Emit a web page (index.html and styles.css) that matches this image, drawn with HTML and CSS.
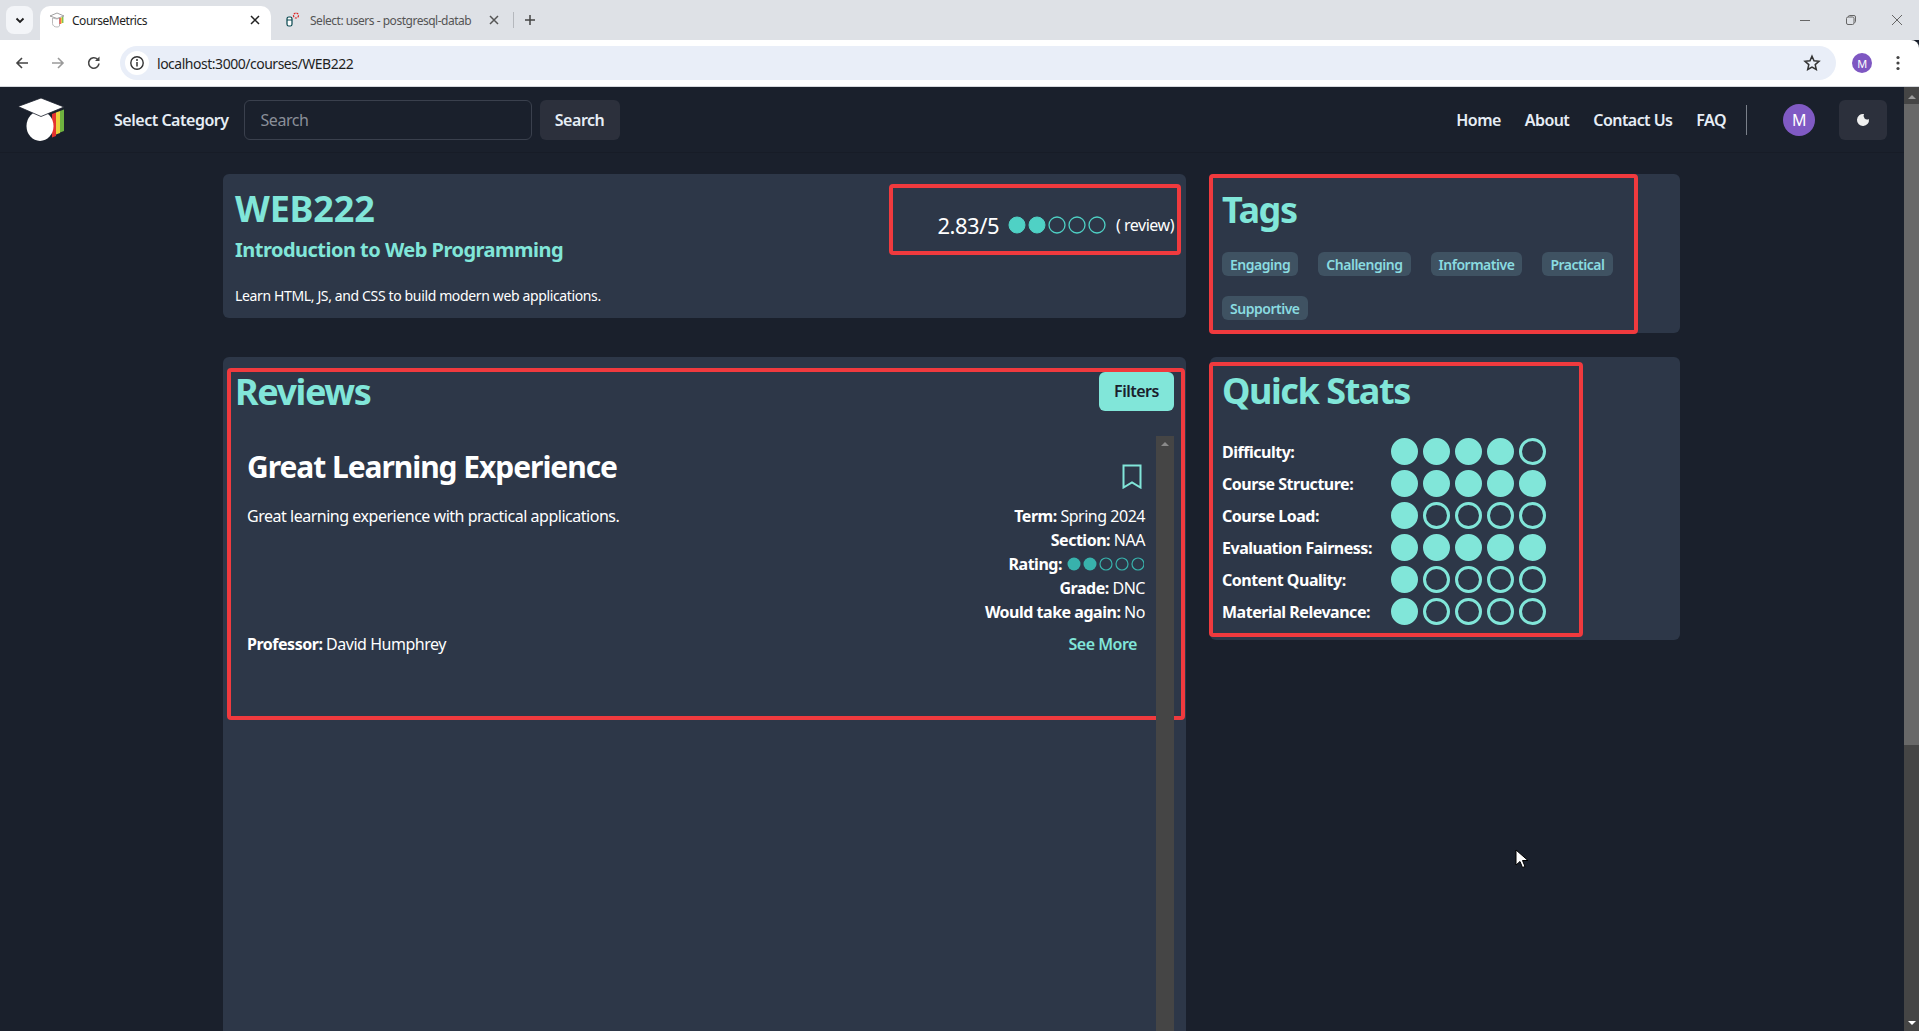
FILE: index.html
```html
<!DOCTYPE html>
<html lang="en">
<head>
<meta charset="utf-8">
<title>CourseMetrics</title>
<link rel="stylesheet" href="styles.css">
</head>
<body>
<div class="window">
  <header class="chrome">
    <div class="tabstrip">
      <button class="tab-menu"><svg width="12" height="12" viewBox="0 0 12 12"><path d="M2.500 4.500 6 8l3.500-3.500" fill="none" stroke="#1f1f1f" stroke-width="1.800"/></svg></button>
      <div class="tab tab-active">
        <svg class="fav" width="16" height="16" viewBox="0 0 16 16"><path d="M8 1 15 4 8 6.500 1 4Z" fill="#fff" stroke="#8a8a8a" stroke-width=".8"/><path d="M3.500 6v5.500C3.500 14 6 15 8 15s2.500-1 2.500-1V6L8 7Z" fill="#fff" stroke="#aaa" stroke-width=".8"/><rect x="10.500" y="6" width="1.300" height="6" fill="#e33"/><rect x="11.800" y="5.500" width="1.300" height="6" fill="#ec4"/><rect x="13.100" y="5" width="1.300" height="6" fill="#7b4"/></svg>
        <span class="tab-title">CourseMetrics</span>
        <svg class="tab-x" width="10" height="10" viewBox="0 0 10 10"><path d="M1 1l8 8M9 1 1 9" stroke="#222" stroke-width="1.500"/></svg>
      </div>
      <div class="tab tab-idle">
        <svg class="fav" width="16" height="16" viewBox="0 0 16 16"><rect x="3" y="5" width="5" height="9" rx="1.800" fill="#fff" stroke="#06474f" stroke-width="1.200"/><path d="M3 8h5" stroke="#06474f"/><circle cx="12" cy="3.500" r="2.500" fill="none" stroke="#d22" stroke-width="1.200" stroke-dasharray="2 1"/></svg>
        <span class="tab-title tab-title-dim">Select: users - postgresql-datab</span>
        <svg class="tab-x" width="10" height="10" viewBox="0 0 10 10"><path d="M1 1l8 8M9 1 1 9" stroke="#555" stroke-width="1.500"/></svg>
      </div>
      <span class="tab-sep"></span>
      <svg class="tab-plus" width="12" height="12" viewBox="0 0 12 12"><path d="M6 1v10M1 6h10" stroke="#444" stroke-width="1.500"/></svg>
      <div class="win-controls">
        <svg width="12" height="12" viewBox="0 0 12 12"><path d="M1 6.500h10" stroke="#666"/></svg>
        <svg width="12" height="12" viewBox="0 0 12 12"><rect x="1.500" y="3" width="7.500" height="7.500" rx="1.500" fill="none" stroke="#666"/><path d="M3.500 3V2.500a1 1 0 0 1 1-1H9a1.500 1.500 0 0 1 1.500 1.500v4.500a1 1 0 0 1-1 1" fill="none" stroke="#666"/></svg>
        <svg width="12" height="12" viewBox="0 0 12 12"><path d="M1 1l10 10M11 1 1 11" stroke="#666"/></svg>
      </div>
    </div>
    <div class="toolbar">
      <svg class="tool" width="16" height="16" viewBox="0 0 16 16"><path d="M14 8H3M8 3 3 8l5 5" fill="none" stroke="#444" stroke-width="1.600"/></svg>
      <svg class="tool" width="16" height="16" viewBox="0 0 16 16"><path d="M2 8h11M8 3l5 5-5 5" fill="none" stroke="#9a9a9a" stroke-width="1.600"/></svg>
      <svg class="tool" width="16" height="16" viewBox="0 0 16 16"><path d="M13 8.500A5.200 5.200 0 1 1 11.500 4.300" fill="none" stroke="#444" stroke-width="1.600"/><path d="M13.500 1.500v4.500H9" fill="#444"/></svg>
      <div class="omnibox">
        <span class="info"><svg width="16" height="16" viewBox="0 0 16 16"><circle cx="8" cy="8" r="6.200" fill="none" stroke="#333" stroke-width="1.400"/><path d="M8 7v4.500" stroke="#333" stroke-width="1.500"/><circle cx="8" cy="5" r="1" fill="#333"/></svg></span>
        <span class="url">localhost:3000/courses/WEB222</span>
        <svg class="star" width="18" height="18" viewBox="0 0 18 18"><path d="M9 2.200l2 4.600 5 .5-3.800 3.300 1.100 4.900L9 13l-4.300 2.500 1.100-4.900L2 7.300l5-.5Z" fill="none" stroke="#333" stroke-width="1.500"/></svg>
      </div>
      <span class="chrome-avatar">M</span>
      <svg class="kebab" width="4" height="16" viewBox="0 0 4 16"><circle cx="2" cy="2.500" r="1.600" fill="#444"/><circle cx="2" cy="8" r="1.600" fill="#444"/><circle cx="2" cy="13.500" r="1.600" fill="#444"/></svg>
    </div>
  </header>

  <div class="viewport">
    <div class="page">
      <nav class="navbar">
        <svg class="logo" width="48" height="44" viewBox="0 0 48 44"><path d="M34 16l4-1.500V38l-4 1.500Z" fill="#e5332f"/><path d="M38 14.500l4-1.500V35l-4 1.500Z" fill="#e8d03c"/><path d="M42 13l4-1.500V33l-4 1.500Z" fill="#6fb23f"/><ellipse cx="22" cy="28" rx="13.500" ry="15" fill="#fff"/><path d="M23 0 46 9 23 18.500 0 8.500Z" fill="#fff" stroke="#1a202c" stroke-width=".8"/></svg>
        <span class="nav-category">Select Category</span>
        <input class="nav-input" type="text" placeholder="Search">
        <button class="nav-search">Search</button>
        <div class="nav-links">
          <a>Home</a><a>About</a><a>Contact Us</a><a>FAQ</a>
        </div>
        <span class="nav-divider"></span>
        <span class="nav-avatar">M</span>
        <button class="nav-theme"><svg width="16" height="16" viewBox="0 0 16 16"><path d="M9 2.100A6 6 0 1 0 13.900 7 3.600 3.600 0 0 1 9 2.100Z" fill="#f0f0f0"/></svg></button>
      </nav>

      <main class="content">
        <section class="card course-card">
          <div class="course-head">
            <h1 class="h-big h-code">WEB222</h1>
            <div class="course-rating mark">
              <span class="rating-num">2.83/5</span>
              <svg width="100" height="18" viewBox="0 0 100 18" class="rating-dots">
                <circle cx="10" cy="9" r="8" fill="#4fd1c5" stroke="#4fd1c5" stroke-width="1"/>
                <circle cx="30" cy="9" r="8" fill="#4fd1c5" stroke="#4fd1c5" stroke-width="1"/>
                <circle cx="50" cy="9" r="8" fill="none" stroke="#4fd1c5" stroke-width="1.300"/>
                <circle cx="70" cy="9" r="8" fill="none" stroke="#4fd1c5" stroke-width="1.300"/>
                <circle cx="90" cy="9" r="8" fill="none" stroke="#4fd1c5" stroke-width="1.300"/>
              </svg>
              <span class="rating-count">( review)</span>
            </div>
          </div>
          <h2 class="course-sub">Introduction to Web Programming</h2>
          <p class="course-desc">Learn HTML, JS, and CSS to build modern web applications.</p>
        </section>

        <section class="card tags-card">
          <div class="tags-inner mark">
            <h2 class="h-big">Tags</h2>
            <div class="tag-list">
              <span class="tag">Engaging</span>
              <span class="tag">Challenging</span>
              <span class="tag">Informative</span>
              <span class="tag">Practical</span>
              <span class="tag">Supportive</span>
            </div>
          </div>
        </section>

        <section class="card reviews-card">
          <div class="reviews-inner mark">
            <div class="reviews-head">
              <h2 class="h-big">Reviews</h2>
              <button class="filters">Filters</button>
            </div>
          </div>
          <div class="reviews-scroll">
            <article class="review">
              <div class="review-top">
                <h3 class="review-title">Great Learning Experience</h3>
                <svg class="bookmark" width="20" height="25" viewBox="0 0 20 25"><path d="M1.500 1.500h17v22L10 18.500 1.500 23.500Z" fill="none" stroke="#81e6d9" stroke-width="2"/></svg>
              </div>
              <div class="review-mid">
                <p class="review-text">Great learning experience with practical applications.</p>
                <div class="review-meta">
                  <div><b>Term:</b> Spring 2024</div>
                  <div><b>Section:</b> NAA</div>
                  <div class="meta-rating"><b>Rating:</b>
                    <svg width="78" height="16" viewBox="0 0 78 16">
                      <circle cx="8" cy="8" r="6.500" fill="#38b2ac"/>
                      <circle cx="24" cy="8" r="6.500" fill="#38b2ac"/>
                      <circle cx="40" cy="8" r="6" fill="none" stroke="#38b2ac" stroke-width="1.200"/>
                      <circle cx="56" cy="8" r="6" fill="none" stroke="#38b2ac" stroke-width="1.200"/>
                      <circle cx="72" cy="8" r="6" fill="none" stroke="#38b2ac" stroke-width="1.200"/>
                    </svg>
                  </div>
                  <div><b>Grade:</b> DNC</div>
                  <div><b>Would take again:</b> No</div>
                </div>
              </div>
              <div class="review-foot">
                <span><b>Professor:</b> David Humphrey</span>
                <a class="see-more">See More</a>
              </div>
            </article>
            <div class="inner-scrollbar"><svg width="10" height="6" viewBox="0 0 10 6"><path d="M5 1 9 5H1Z" fill="#8a8a8a"/></svg></div>
          </div>
        </section>

        <section class="card stats-card">
          <div class="stats-inner mark">
            <h2 class="h-big">Quick Stats</h2>
            <div class="stat-grid">
              <span class="stat-label">Difficulty:</span>
              <span class="dots"><i class="dot on"></i><i class="dot on"></i><i class="dot on"></i><i class="dot on"></i><i class="dot"></i></span>
              <span class="stat-label">Course Structure:</span>
              <span class="dots"><i class="dot on"></i><i class="dot on"></i><i class="dot on"></i><i class="dot on"></i><i class="dot on"></i></span>
              <span class="stat-label">Course Load:</span>
              <span class="dots"><i class="dot on"></i><i class="dot"></i><i class="dot"></i><i class="dot"></i><i class="dot"></i></span>
              <span class="stat-label">Evaluation Fairness:</span>
              <span class="dots"><i class="dot on"></i><i class="dot on"></i><i class="dot on"></i><i class="dot on"></i><i class="dot on"></i></span>
              <span class="stat-label">Content Quality:</span>
              <span class="dots"><i class="dot on"></i><i class="dot"></i><i class="dot"></i><i class="dot"></i><i class="dot"></i></span>
              <span class="stat-label">Material Relevance:</span>
              <span class="dots"><i class="dot on"></i><i class="dot"></i><i class="dot"></i><i class="dot"></i><i class="dot"></i></span>
            </div>
          </div>
        </section>
      </main>
      <svg class="cursor" width="14" height="20" viewBox="0 0 14 20"><path d="M1 1v15l4-3.500 2.500 6 2.500-1-2.500-6H13Z" fill="#fff" stroke="#000"/></svg>
    </div>
    <div class="page-scrollbar">
      <svg class="sb-arrow" width="10" height="6" viewBox="0 0 10 6"><path d="M5 1 9 5H1Z" fill="#9a9a9a"/></svg>
      <div class="sb-thumb"></div>
      <svg class="sb-arrow sb-arrow-down" width="10" height="6" viewBox="0 0 10 6"><path d="M5 5 9 1H1Z" fill="#fff"/></svg>
    </div>
  </div>
</div>
</body>
</html>
```
FILE: styles.css
```css
* { box-sizing: border-box; }
html, body { margin: 0; height: 100%; overflow: hidden; }
body { font-family: "Noto Sans", "Open Sans", sans-serif; font-size: 16px; letter-spacing: -0.03em; color: #fff; background: #1a202c; }
h1, h2, h3, p { margin: 0; }
button { font-family: inherit; letter-spacing: inherit; border: 0; padding: 0; }

.window { height: 100vh; display: flex; flex-direction: column; }
.chrome { flex: none; height: 87px; display: flex; flex-direction: column; border-bottom: 1px solid #d5d8dd; }
.tabstrip { height: 40px; background: #dee1e6; display: flex; align-items: flex-end; padding-left: 6px; }
.tab-menu { width: 27px; height: 28px; background: #f3f5f8; border-radius: 8px; margin: 0 7px 6px 0; display: flex; align-items: center; justify-content: center; }
.tab { width: 231px; height: 34px; display: flex; align-items: center; padding: 0 11px 6px 9px; font-size: 12px; color: #1f1f1f; border-radius: 10px 10px 0 0; }
.tab-active { background: #fff; }
.tab-title { margin-left: 7px; flex: 1; white-space: nowrap; }
.tab-title-dim { color: #555; }
.tab-x { flex: none; margin-left: 8px; }
.tab-idle { width: 239px; padding: 0 11px 6px 13px; }
.tab-idle .tab-title { margin-left: 10px; }
.tab-sep { width: 1px; height: 16px; background: #b5b8bd; margin: 0 10px 12px 3px; }
.tab-plus { margin: 0 0 14px 0; }
.win-controls { margin-left: auto; height: 40px; display: flex; align-items: center; gap: 34px; padding-right: 16px; align-self: flex-start; }
.toolbar { flex: 1; background: #fff; display: flex; align-items: center; padding: 0 0 0 14px; border-radius: 0 8px 0 0; }
.tool { margin-right: 20px; flex: none; }
.omnibox { margin-left: -2px; width: 1716px; height: 34px; background: #e9eef8; border-radius: 17px; display: flex; align-items: center; padding-left: 5px; font-size: 14px; color: #1f1f1f; }
.info { width: 24px; height: 24px; border-radius: 50%; background: #fff; display: flex; align-items: center; justify-content: center; flex: none; }
.url { margin-left: 8px; flex: 1; }
.star { margin-right: 15px; }
.chrome-avatar { width: 20px; height: 20px; border-radius: 50%; background: #7e57c2; color: #fff; font-size: 11px; display: flex; align-items: center; justify-content: center; margin-left: 16px; flex: none; }
.kebab { margin-left: 24px; flex: none; }

.viewport { flex: 1; min-height: 0; display: flex; }
.page { flex: 1; min-width: 0; position: relative; overflow: hidden; }
.page-scrollbar { width: 15px; flex: none; background: #454545; position: relative; display: flex; flex-direction: column; align-items: center; }
.sb-arrow { margin-top: 7px; flex: none; }
.sb-thumb { width: 15px; height: 641px; margin-top: 4px; background: #686868; }
.sb-arrow-down { margin-top: auto; margin-bottom: 5px; }

.navbar { height: 66px; display: flex; align-items: center; padding: 0 17px 0 18px; border-bottom: 1px solid #171c27; }
.logo { flex: none; }
.nav-category { margin-left: 48px; font-weight: 600; color: #e6edf5; white-space: nowrap; }
.nav-input { margin-left: 15px; width: 288px; height: 40px; background: transparent; border: 1px solid #3a404d; border-radius: 6px; padding: 0 16px; font: 16px "Noto Sans", sans-serif; letter-spacing: -0.03em; color: #fff; }
.nav-input::placeholder { color: #8a8f99; opacity: 1; }
.nav-search { margin-left: 8px; width: 80px; height: 40px; background: #2c303c; border-radius: 6px; color: #e6edf5; font-size: 16px; font-weight: 600; }
.nav-links { margin-left: auto; display: flex; gap: 24px; font-weight: 600; color: #e6edf5; letter-spacing: -0.035em; }
.nav-divider { width: 1px; height: 30px; background: #7a808a; margin-left: 20px; }
.nav-avatar { width: 32px; height: 32px; border-radius: 50%; background: #805ac4; color: #fff; font-size: 16px; display: flex; align-items: center; justify-content: center; margin-left: 36px; }
.nav-theme { width: 48px; height: 40px; margin-left: 24px; background: #2c303c; border-radius: 6px; display: flex; align-items: center; justify-content: center; }

.content { width: 1458px; margin: 21px auto 0; display: grid; grid-template-columns: 963px 470px; column-gap: 24px; grid-template-rows: 159px auto; row-gap: 24px; align-items: start; }
.card { background: #2d3748; border-radius: 6px; }
.mark { position: relative; outline: 4px solid #f03a3e; outline-offset: -4px; border-radius: 4px; }
.h-big { font-size: 36px; font-weight: 700; line-height: 44px; color: #81e6d9; letter-spacing: -0.04em; }
.h-code { letter-spacing: -0.005em; }

.course-card { height: 144px; padding: 13px 12px 0; position: relative; }
.course-head { display: flex; justify-content: space-between; height: 40px; }
.course-rating { position: absolute; top: 10px; right: 5px; width: 292px; height: 71px; display: flex; align-items: center; padding: 10px 7px 0 0; justify-content: flex-end; }
.rating-num { font-size: 22px; color: #fff; }
.rating-dots { margin-left: 8px; }
.rating-count { margin-left: 9px; font-size: 16px; }
.course-sub { margin-top: 9px; font-size: 20px; line-height: 28px; font-weight: 700; color: #81e6d9; letter-spacing: -0.026em; }
.course-desc { margin-top: 22px; font-size: 14px; line-height: 20px; color: #fff; letter-spacing: -0.026em; }

.tags-card { height: 159px; }
.tags-inner { width: 429px; height: 160px; margin-left: -1px; padding: 14px 13px 0; }
.tag-list { margin-top: 20px; display: flex; flex-wrap: wrap; gap: 20px; }
.tag { height: 24px; padding: 0 8px; display: flex; align-items: center; border-radius: 6px; background: #3f5262; color: #8adbe0; font-size: 14px; font-weight: 600; }

.reviews-card { position: relative; height: 700px; }
.reviews-inner { position: absolute; left: 4px; top: 11px; right: 1px; height: 352px; padding: 0 8px; pointer-events: none; }
.reviews-head { display: flex; justify-content: space-between; align-items: flex-start; padding-top: 2px; }
.filters { margin: 2px 3px 0 0; width: 75px; height: 39px; padding-bottom: 2px; background: #81e6d9; color: #1a202c; border-radius: 6px; font-size: 16px; font-weight: 600; }
.reviews-scroll { position: absolute; left: 0; right: 12px; top: 79px; bottom: 0; display: flex; }
.review { flex: 1; padding: 11px 11px 0 24px; }
.review-top { display: flex; justify-content: space-between; align-items: flex-start; }
.review-title { font-size: 30px; font-weight: 700; line-height: 40px; color: #fff; letter-spacing: -0.035em; }
.bookmark { margin: 17px 3px 0 0; }
.review-mid { display: flex; justify-content: space-between; margin-top: 15px; }
.review-text { line-height: 24px; }
.review-meta { text-align: right; line-height: 24px; }
.meta-rating { display: flex; justify-content: flex-end; align-items: center; gap: 4px; }
.meta-rating svg { margin-right: 1px; }
.review-foot { display: flex; justify-content: space-between; margin-top: 8px; line-height: 24px; padding-right: 8px; }
b { font-weight: 700; }
.see-more { color: #81e6d9; font-weight: 600; }
.inner-scrollbar { width: 18px; flex: none; background: #454545; display: flex; justify-content: center; padding-top: 5px; }
.inner-scrollbar svg { flex: none; }

.stats-card { height: 283px; }
.stats-inner { width: 374px; height: 275px; margin: 5px 0 0 -1px; padding: 7px 13px 0; }
.stat-grid { margin-top: 25px; display: grid; grid-template-columns: 169px auto; row-gap: 5px; align-items: center; justify-content: start; }
.stat-label { font-weight: 700; font-size: 16px; white-space: nowrap; }
.dots { display: flex; gap: 5px; }
.dot { width: 27px; height: 27px; border-radius: 50%; border: 3px solid #81e6d9; }
.dot.on { background: #81e6d9; }

.cursor { position: absolute; left: 1515px; top: 762px; }
```
